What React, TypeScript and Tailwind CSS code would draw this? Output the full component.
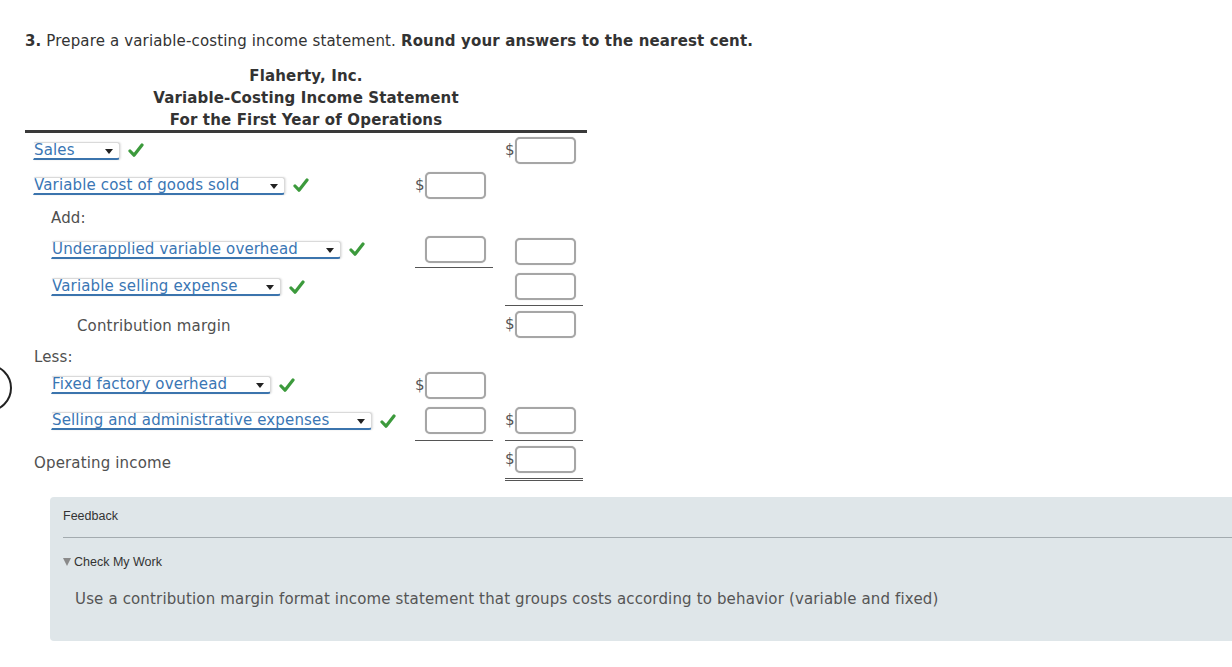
import React from 'react'

const verdana = { fontFamily: '"DejaVu Sans", Verdana, sans-serif', letterSpacing: '0.15px' }
const arial = { fontFamily: '"Liberation Sans", Arial, sans-serif', letterSpacing: '0px' }

function Check() {
  return (
    <svg width="16" height="15" viewBox="0 0 16 15" className="ml-[8px] shrink-0">
      <path d="M2 8 L6 12.2 L14 2" fill="none" stroke="#3c9a3c" strokeWidth="3.2" strokeLinecap="round" strokeLinejoin="round" />
    </svg>
  )
}

function Select({ label, width }: { label: string; width: number }) {
  return (
    <div className="flex items-center">
      <div
        className="relative flex h-[18px] items-end overflow-hidden rounded-t-[3px] rounded-br-[3px] border border-b-2 border-[#dadada] border-b-[#3b74ad] border-l-transparent bg-white pl-[0px] text-[#3a76b4] shadow-[1px_0_2px_rgba(0,0,0,0.12)]"
        style={{ width }}
      >
        <span className="whitespace-nowrap leading-[15px]">{label}</span>
        <span className="absolute right-[6px] top-[6px] h-0 w-0 border-x-[4px] border-t-[5px] border-x-transparent border-t-[#222]" />
      </div>
      <Check />
    </div>
  )
}

function Box({ dollar = false, shift = false }: { dollar?: boolean; shift?: boolean }) {
  return (
    <div className={`flex items-center ${shift ? 'mt-[3px]' : ''}`}>
      <span className="w-[10px] text-[15px] leading-none text-[#555]">{dollar ? '$' : ''}</span>
      <div className="h-[27px] w-[61px] rounded-[5px] border-2 border-[#a6a6a6] bg-white shadow-[0_0_1px_rgba(0,0,0,0.25)]" />
    </div>
  )
}

type Cell = { dollar?: boolean; line?: 'single' | 'double'; shift?: boolean } | null

function Row({
  h,
  children,
  mid = null,
  right = null,
}: {
  h: number
  children?: React.ReactNode
  mid?: Cell
  right?: Cell
}) {
  const cell = (c: Cell) => {
    if (!c) return <div />
    const border =
      c.line === 'single'
        ? 'border-b border-[#555]'
        : c.line === 'double'
        ? 'border-b-[3px] border-double border-[#555]'
        : ''
    return (
      <div className={`flex items-center ${border}`}>
        <Box dollar={c.dollar} shift={c.shift} />
      </div>
    )
  }
  return (
    <div className="grid grid-cols-[390px_78px_12px_78px]" style={{ height: h }}>
      <div className="flex items-center">{children}</div>
      {cell(mid)}
      <div />
      {cell(right)}
    </div>
  )
}

export default function App() {
  return (
    <div className="relative min-h-screen overflow-hidden bg-white text-[15px] text-[#333]" style={verdana}>
      <svg width="14" height="54" viewBox="0 0 14 54" className="absolute left-0 top-[361px]">
        <circle cx="-12" cy="27" r="23" fill="none" stroke="#222" strokeWidth="2" />
      </svg>

      <p className="pl-[25px] pt-[32px] leading-[18px]">
        <b>3.</b> Prepare a variable-costing income statement. <b>Round your answers to the nearest cent.</b>
      </p>

      <div className="ml-[25px] w-[562px]">
        <div className="mt-[14px] border-b-[3px] border-[#3a3a3a] text-center font-bold leading-[22px] text-[#333]">
          <div className="pt-[1px]">Flaherty, Inc.</div>
          <div>Variable-Costing Income Statement</div>
          <div className="h-[21px]">For the First Year of Operations</div>
        </div>

        <Row h={35} right={{ dollar: true }}>
          <div className="pl-[8px]">
            <Select label="Sales" width={87} />
          </div>
        </Row>
        <Row h={35} mid={{ dollar: true }}>
          <div className="pl-[8px]">
            <Select label="Variable cost of goods sold" width={252} />
          </div>
        </Row>
        <Row h={28}>
          <span className="pl-[26px] pt-[2px] text-[#505050]">Add:</span>
        </Row>
        <Row h={37} mid={{ line: 'single' }} right={{ shift: true }}>
          <div className="pl-[26px]">
            <Select label="Underapplied variable overhead" width={290} />
          </div>
        </Row>
        <Row h={38} right={{ line: 'single' }}>
          <div className="pl-[26px]">
            <Select label="Variable selling expense" width={230} />
          </div>
        </Row>
        <Row h={36} right={{ dollar: true }}>
          <span className="pl-[52px] pt-[4px] text-[#505050]">Contribution margin</span>
        </Row>
        <Row h={27}>
          <span className="pl-[9px] pt-[3px] text-[#505050]">Less:</span>
        </Row>
        <Row h={32} mid={{ dollar: true }}>
          <div className="pl-[26px]">
            <Select label="Fixed factory overhead" width={220} />
          </div>
        </Row>
        <Row h={40} mid={{ line: 'single' }} right={{ dollar: true, line: 'single' }}>
          <div className="pl-[26px]">
            <Select label="Selling and administrative expenses" width={321} />
          </div>
        </Row>
        <Row h={40} right={{ dollar: true, line: 'double' }}>
          <span className="pl-[9px] pt-[4px] text-[#505050]">Operating income</span>
        </Row>
      </div>

      <div className="ml-[50px] mt-[16px] h-[144px] w-[1200px] rounded-[4px] bg-[#dfe6e9]">
        <div
          className="ml-[13px] border-b border-[#a3abaf] pb-[13px] pt-[11px] text-[12.5px] leading-[16px] text-[#333]"
          style={arial}
        >
          Feedback
        </div>
        <div className="ml-[13px] mt-[16px] flex items-center text-[12.5px] leading-[16px] text-[#333]" style={arial}>
          <span className="mr-[3px] h-0 w-0 border-x-[4px] border-t-[8px] border-x-transparent border-t-[#8a8a8a]" />
          Check My Work
        </div>
        <p className="ml-[25px] mt-[20px] leading-[18px] text-[#555]">
          Use a contribution margin format income statement that groups costs according to behavior (variable and fixed)
        </p>
      </div>
    </div>
  )
}
